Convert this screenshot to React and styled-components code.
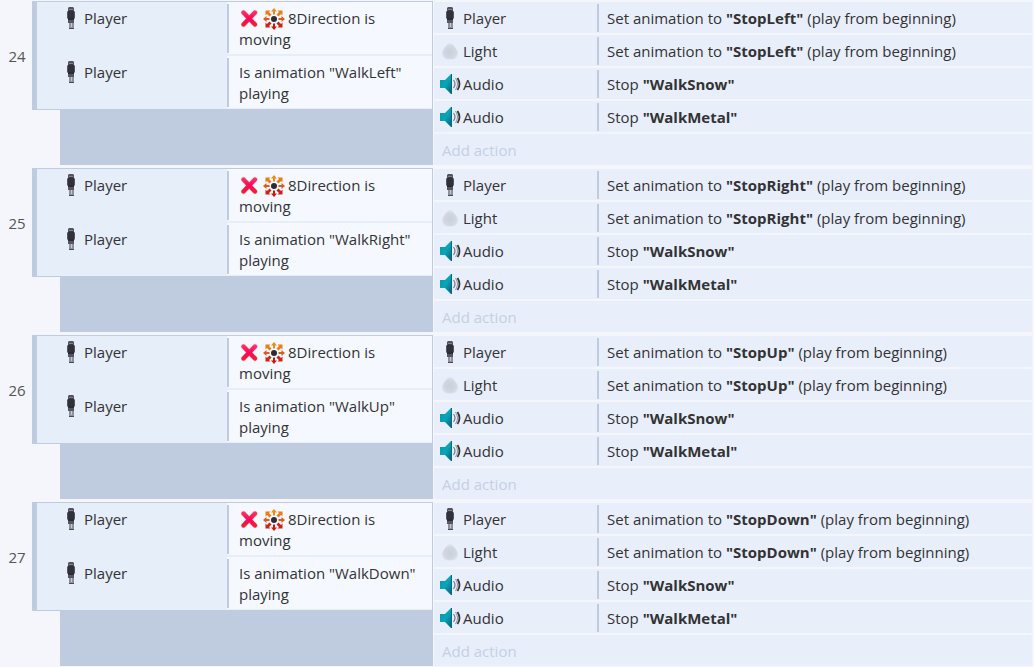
import React from 'react'
import styled, { createGlobalStyle } from 'styled-components'

const GlobalStyle = createGlobalStyle`
	* {
		box-sizing: border-box;
	}
	body {
		margin: 0;
		background: #f4f6fb;
		color: #333;
		font-family: 'Open Sans', 'Noto Sans', sans-serif;
		font-size: 15px;
		line-height: 21px;
	}
`
const Sheet = styled.main`
	display: flex;
	flex-direction: column;
	gap: 3px;
	padding: 1px 2px 0 0;
`
const Event = styled.section`
	display: grid;
	grid-template-columns: 32px 401px 1fr;
`
const Margin = styled.div`
	display: flex;
	align-items: center;
	justify-content: center;
	height: 110px;
	padding-left: 2px;
	color: #555;
`
const ConditionSide = styled.div`
	display: flex;
	flex-direction: column;
`
const Conditions = styled.div`
	display: flex;
	flex-direction: column;
	gap: 2px;
	padding-bottom: 1px;
	background: #e5eef9;
	border: 1px solid #bfcbdf;
	border-left-width: 5px;
`
const SubArea = styled.div`
	flex: 1;
	margin-left: 28px;
	background: #bfcbdf;
`
const Condition = styled.div`
	display: grid;
	grid-template-columns: 190px 1fr;
`
const ObjectCell = styled.div`
	display: flex;
	gap: 2px;
	padding: 6px 0 4px ${({ $indent }) => $indent}px;
`
const Divided = styled.div`
	display: flex;
	background: ${({ $bg }) => $bg};
	&:before {
		content: '';
		flex: none;
		width: 2px;
		margin: 2px 0 1px;
		background: #bfcbdf;
	}
`
const Text = styled.p`
	margin: 0;
	padding: 6px 8px 4px ${({ $left }) => $left}px;
	b {
		font-weight: 700;
	}
`
const Actions = styled.div`
	display: flex;
	flex-direction: column;
	gap: 2px;
	padding: 1px 0 0 1px;
`
const Action = styled.div`
	display: grid;
	grid-template-columns: 163px 1fr;
	background: #e8effb;
`
const AddAction = styled.button`
	padding: 6px 8px 4px;
	border: 0;
	background: #e8effb;
	color: #c5d0e4;
	font: inherit;
	text-align: left;
	cursor: pointer;
`
const IconBox = styled.span`
	flex: none;
	display: flex;
	justify-content: center;
	align-items: center;
	width: 21px;
	height: 21px;
	svg {
		flex: none;
	}
`
const InlineIcons = styled.span`
	display: inline-flex;
	gap: 3px;
	height: 21px;
	margin-right: 3px;
	align-items: center;
	vertical-align: top;
`

const PlayerIcon = () => (
	<svg width='9' height='23' viewBox='0 0 9 23' aria-hidden='true'>
		<path d='M2 0h4l1 1v3H1V1z' fill='#54545f' />
		<path d='M2 2h4v1H2z' fill='#85808b' />
		<path d='M2 3h4v1H2z' fill='#3c3b45' />
		<path d='M1 4h6l1 1v6H0V5z' fill='#30313a' />
		<path d='M0 5h1v6H0zM7 5h1v6H7z' fill='#555660' />
		<path d='M0 11h1v1H0zM7 11h1v1H7z' fill='#9a99a6' />
		<path d='M1 11h6v2H1z' fill='#2a2b33' />
		<path d='M1 13h6v3H1z' fill='#55565f' />
		<path d='M2 16h5v5H2z' fill='#8d909d' />
		<path d='M4 16h1v4H4z' fill='#c4c8d4' />
		<path d='M2 21h5v1H2z' fill='#494a54' />
	</svg>
)

const LightIcon = () => (
	<svg width='19' height='21' viewBox='0 0 19 21' aria-hidden='true'>
		<defs>
			<radialGradient id='glow' cy='0.55'>
				<stop offset='0' stopColor='#cbcfd9' />
				<stop offset='0.7' stopColor='#d1d6e0' />
				<stop offset='1' stopColor='#dde3ef' />
			</radialGradient>
		</defs>
		<path d='M9 2c3 0 5 4 7 7s1 6-1 8-10 2-12 0-3-5-1-8 4-7 7-7z' fill='url(#glow)' />
	</svg>
)

const AudioIcon = () => (
	<svg width='21' height='21' viewBox='0 0 21 21' aria-hidden='true'>
		<defs>
			<linearGradient id='speaker' x1='0' y1='0' x2='1' y2='1'>
				<stop offset='0' stopColor='#1091a6' />
				<stop offset='0.5' stopColor='#06a6b8' />
				<stop offset='1' stopColor='#0b5878' />
			</linearGradient>
		</defs>
		<path d='M0 6h5l6-6h1v20h-1l-6-6H0z' fill='url(#speaker)' />
		<path d='M11 0h1v20h-1z' fill='#12637f' />
		<path d='M13.500 6q3 4 0 8' fill='none' stroke='#73777f' strokeWidth='1.2' />
		<path d='M15.500 4q4 6 0 12' fill='none' stroke='#8d9199' strokeWidth='1' />
		<path d='M17.500 4q4 6 0 12' fill='none' stroke='#33363c' strokeWidth='1.8' />
	</svg>
)

const InvertIcon = () => (
	<svg width='21' height='21' viewBox='0 0 21 21' role='img' aria-label='Inverted'>
		<defs>
			<linearGradient id='cross' gradientUnits='userSpaceOnUse' x1='0' y1='2' x2='0' y2='19'>
				<stop offset='0' stopColor='#ff3a62' />
				<stop offset='0.5' stopColor='#f8085c' />
				<stop offset='1' stopColor='#ee2424' />
			</linearGradient>
		</defs>
		<g fill='none' strokeLinecap='round'>
			<path d='M4.500 4.500 16 16.500M16 4.500 4.500 16.500' stroke='#f0a8b4' strokeWidth='5' />
			<path d='M4.500 4.500 16 16.500M16 4.500 4.500 16.500' stroke='url(#cross)' strokeWidth='4' />
		</g>
	</svg>
)

const sides = [
	[0, '#ee8a14'],
	[90, '#df5a1c'],
	[180, '#cf1408'],
	[270, '#df5a1c']
]
const corners = [
	[0, '#ea7c14'],
	[90, '#cc2412'],
	[180, '#cc2412'],
	[270, '#ea7c14']
]

const DirectionIcon = () => (
	<svg width='22' height='22' viewBox='0 0 22 22' aria-hidden='true'>
		<circle cx='11' cy='11' r='3' fill='#2b2c33' />
		{sides.map(([angle, color]) => (
			<path key={angle} d='M11 0 14 3.500H12V6.500H10V3.500H8z' fill={color} transform={`rotate(${angle} 11 11)`} />
		))}
		{corners.map(([angle, color]) => (
			<path
				key={angle}
				d='M14.500 2.500H19.500V7.500L18 6 15.500 8.500 13.500 6.500 16 4z'
				fill={color}
				transform={`rotate(${angle} 11 11)`}
			/>
		))}
	</svg>
)

const icons = { Player: PlayerIcon, Light: LightIcon, Audio: AudioIcon }

const ObjectName = ({ name, indent }) => {
	const Icon = icons[name]

	return (
		<ObjectCell $indent={indent}>
			<IconBox>
				<Icon />
			</IconBox>
			{name}
		</ObjectCell>
	)
}

const events = [
	{ number: 24, direction: 'Left' },
	{ number: 25, direction: 'Right' },
	{ number: 26, direction: 'Up' },
	{ number: 27, direction: 'Down' }
]

const EventBlock = ({ number, direction }) => {
	const actions = [
		{ object: 'Player', verb: 'Set animation to', value: `Stop${direction}`, note: '(play from beginning)' },
		{ object: 'Light', verb: 'Set animation to', value: `Stop${direction}`, note: '(play from beginning)' },
		{ object: 'Audio', verb: 'Stop', value: 'WalkSnow' },
		{ object: 'Audio', verb: 'Stop', value: 'WalkMetal' }
	]

	return (
		<Event>
			<Margin>{number}</Margin>
			<ConditionSide>
				<Conditions>
					<Condition>
						<ObjectName name='Player' indent={24} />
						<Divided $bg='#f5f9ff'>
							<Text $left={10}>
								<InlineIcons>
									<InvertIcon />
									<DirectionIcon />
								</InlineIcons>
								8Direction is moving
							</Text>
						</Divided>
					</Condition>
					<Condition>
						<ObjectName name='Player' indent={24} />
						<Divided $bg='#f5f9ff'>
							<Text $left={10}>{`Is animation "Walk${direction}" playing`}</Text>
						</Divided>
					</Condition>
				</Conditions>
				<SubArea />
			</ConditionSide>
			<Actions>
				{actions.map((a, i) => (
					<Action key={i}>
						<ObjectName name={a.object} indent={6} />
						<Divided>
							<Text $left={8}>
								{a.verb} <b>{`"${a.value}"`}</b> {a.note}
							</Text>
						</Divided>
					</Action>
				))}
				<AddAction type='button'>Add action</AddAction>
			</Actions>
		</Event>
	)
}

const App = () => (
	<>
		<GlobalStyle />
		<Sheet>
			{events.map((e) => (
				<EventBlock key={e.number} {...e} />
			))}
		</Sheet>
	</>
)

export default App
